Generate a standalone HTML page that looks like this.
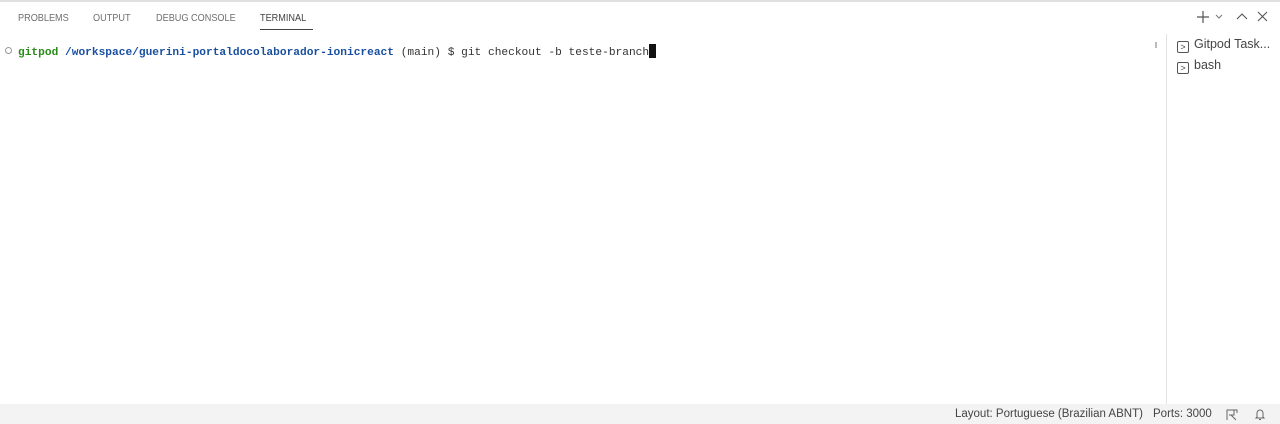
<!DOCTYPE html>
<html><head><style>
*{margin:0;padding:0;box-sizing:border-box}
body{width:1280px;height:424px;background:#fff;position:relative;overflow:hidden;font-family:"Liberation Sans",sans-serif}
.top{position:absolute;left:0;top:0;width:1280px;height:2px;background:#e0e0e0}
.tab{position:absolute;top:12px;font-size:10.5px;color:#6f6f6f;transform:scaleX(0.87);transform-origin:left}
.ul{position:absolute;left:260px;top:29px;width:53px;height:1px;background:#424242}
.term{position:absolute;left:18px;top:43px;font-family:"Liberation Mono",monospace;font-size:11.2px;color:#333;white-space:pre;line-height:16px}
.g{color:#2a8a1a;font-weight:bold}.b{color:#1a4fa0;font-weight:bold}
.cur{display:inline-block;width:7px;height:14px;background:#111;vertical-align:-3px}
.dot{position:absolute;left:5px;top:47px;width:7px;height:7px;border:1px solid #999;border-radius:50%}
.div{position:absolute;left:1166px;top:34px;width:1px;height:370px;background:#e2e2e2}
.item{position:absolute;left:1177px;font-size:12.5px;color:#444}
.box{display:inline-block;width:12px;height:12px;border:1px solid #555;border-radius:2px;font-size:9px;line-height:10px;text-align:center;vertical-align:-2px;margin-right:5px}
.sb{position:absolute;left:0;top:404px;width:1280px;height:20px;background:#f3f3f3;font-size:11.5px;color:#444}
.sb span{position:absolute;top:4px}
.ic{position:absolute;color:#555}
</style></head><body>
<div class="top"></div>
<div class="tab" style="left:18px">PROBLEMS</div>
<div class="tab" style="left:93px">OUTPUT</div>
<div class="tab" style="left:156px">DEBUG CONSOLE</div>
<div class="tab" style="left:260px;color:#424242">TERMINAL</div>
<div class="ul"></div>
<div class="dot"></div>
<div class="term" style="top:44px"><span class="g">gitpod</span> <span class="b">/workspace/guerini-portaldocolaborador-ionicreact</span> (main) $ git checkout -b teste-branch<span class="cur"></span></div>
<svg class="ic" style="left:1196px;top:10px" width="14" height="14"><path d="M7 1v12M1 7h12" stroke="#555" stroke-width="1.2"/></svg>
<svg class="ic" style="left:1214px;top:13px" width="10" height="8"><path d="M2 2l3 3 3-3" stroke="#777" fill="none"/></svg>
<svg class="ic" style="left:1236px;top:12px" width="12" height="8"><path d="M1 7l5-5 5 5" stroke="#555" fill="none" stroke-width="1.1"/></svg>
<svg class="ic" style="left:1257px;top:11px" width="11" height="11"><path d="M1 1l9 9M10 1l-9 9" stroke="#555" stroke-width="1.1"/></svg>
<div style="position:absolute;left:1155px;top:42px;width:2px;height:6px;background:#bbb"></div>
<div class="div"></div>
<div class="item" style="top:37px"><span class="box">&gt;</span>Gitpod Task...</div>
<div class="item" style="top:58px"><span class="box">&gt;</span>bash</div>
<div class="sb"><span style="left:955px">Layout: Portuguese (Brazilian ABNT)</span><span style="left:1153px">Ports: 3000</span>
<svg style="position:absolute;left:1225px;top:4px" width="13" height="13"><path d="M2 12V2h7v5H4M6 7l5 5M9 2h3v3" stroke="#666" fill="none"/></svg>
<svg style="position:absolute;left:1254px;top:4px" width="12" height="13"><path d="M3 9V5a3 3 0 0 1 6 0v4l1 1H2zM5 11.5h2" stroke="#666" fill="none"/></svg>
</div>
</body></html>
